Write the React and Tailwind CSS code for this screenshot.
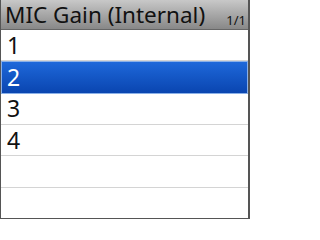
export default function App() {
  const rows = ["1", "2", "3", "4", "", ""];
  return (
    <div className="w-[250px] h-[219px] bg-white overflow-hidden flex flex-col border-l border-r-2 border-b border-l-[#555] border-r-[#555] border-b-[#555]" style={{ fontFamily: '"Noto Sans", sans-serif' }}>
      <div className="h-[30px] shrink-0 flex items-end justify-between pl-[4px] pr-[2px] bg-gradient-to-b from-[#c8c8c8] to-[#888888] border-b border-[#666]">
        <span className="text-[22.5px] leading-[26px] mb-[1px] text-[#111] whitespace-nowrap">MIC Gain (Internal)</span>
        <span className="text-[13px] leading-[14px] mb-[2px] text-[#111] whitespace-nowrap">1/1</span>
      </div>
      {rows.map((r, i) => (
        i === 1 ? (
          <div key={i} className="flex-1 min-h-0 basis-0 flex items-center pl-[5px] text-[23px] leading-none text-white bg-gradient-to-b from-[#1e68da] to-[#0a45b0] border border-[#8ab0e8]">
            {r}
          </div>
        ) : (
          <div key={i} className={`flex-1 min-h-0 basis-0 flex items-center pl-[6px] text-[23px] leading-none text-[#111] ${i === 5 ? "" : "border-b border-[#d4d4d4]"}`}>
            {r}
          </div>
        )
      ))}
    </div>
  );
}
